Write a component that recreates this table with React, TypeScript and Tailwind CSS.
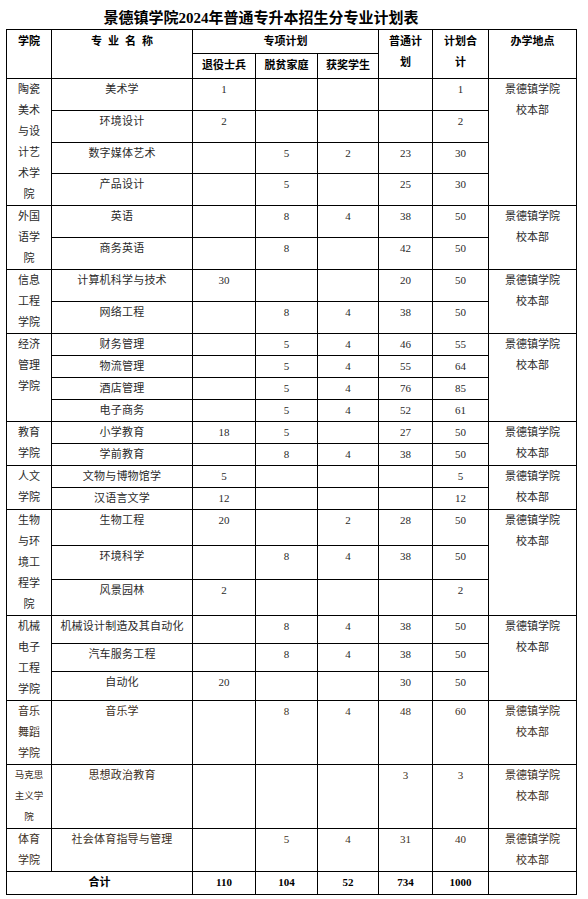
type Row = {
  h: string;
  name: string;
  a?: string;
  b?: string;
  c?: string;
  d?: string;
  e?: string;
};

type Group = {
  college: string[];
  small?: boolean;
  tint?: boolean;
  rows: Row[];
};

const groups: Group[] = [
  {
    college: ['陶瓷', '美术', '与设', '计艺', '术学', '院'],
    rows: [
      { h: 'h-[32px]', name: '美术学', a: '1', e: '1' },
      { h: 'h-[32px]', name: '环境设计', a: '2', e: '2' },
      { h: 'h-[31px]', name: '数字媒体艺术', b: '5', c: '2', d: '23', e: '30' },
      { h: 'h-[32px]', name: '产品设计', b: '5', d: '25', e: '30' },
    ],
  },
  {
    college: ['外国', '语学', '院'],
    rows: [
      { h: 'h-[32px]', name: '英语', b: '8', c: '4', d: '38', e: '50' },
      { h: 'h-[32px]', name: '商务英语', b: '8', d: '42', e: '50' },
    ],
  },
  {
    college: ['信息', '工程', '学院'],
    rows: [
      { h: 'h-[32px]', name: '计算机科学与技术', a: '30', d: '20', e: '50' },
      { h: 'h-[32px]', name: '网络工程', b: '8', c: '4', d: '38', e: '50' },
    ],
  },
  {
    college: ['经济', '管理', '学院'],
    rows: [
      { h: 'h-[22px]', name: '财务管理', b: '5', c: '4', d: '46', e: '55' },
      { h: 'h-[22px]', name: '物流管理', b: '5', c: '4', d: '55', e: '64' },
      { h: 'h-[22px]', name: '酒店管理', b: '5', c: '4', d: '76', e: '85' },
      { h: 'h-[22px]', name: '电子商务', b: '5', c: '4', d: '52', e: '61' },
    ],
  },
  {
    college: ['教育', '学院'],
    rows: [
      { h: 'h-[22px]', name: '小学教育', a: '18', b: '5', d: '27', e: '50' },
      { h: 'h-[22px]', name: '学前教育', b: '8', c: '4', d: '38', e: '50' },
    ],
  },
  {
    college: ['人文', '学院'],
    rows: [
      { h: 'h-[22px]', name: '文物与博物馆学', a: '5', e: '5' },
      { h: 'h-[22px]', name: '汉语言文学', a: '12', e: '12' },
    ],
  },
  {
    college: ['生物', '与环', '境工', '程学', '院'],
    rows: [
      { h: 'h-[36px]', name: '生物工程', a: '20', c: '2', d: '28', e: '50' },
      { h: 'h-[34px]', name: '环境科学', b: '8', c: '4', d: '38', e: '50' },
      { h: 'h-[36px]', name: '风景园林', a: '2', e: '2' },
    ],
  },
  {
    college: ['机械', '电子', '工程', '学院'],
    rows: [
      { h: 'h-[28px]', name: '机械设计制造及其自动化', b: '8', c: '4', d: '38', e: '50' },
      { h: 'h-[28px]', name: '汽车服务工程', b: '8', c: '4', d: '38', e: '50' },
      { h: 'h-[29px]', name: '自动化', a: '20', d: '30', e: '50' },
    ],
  },
  {
    college: ['音乐', '舞蹈', '学院'],
    tint: true,
    rows: [{ h: 'h-[64px]', name: '音乐学', b: '8', c: '4', d: '48', e: '60' }],
  },
  {
    college: ['马克思', '主义学', '院'],
    small: true,
    tint: true,
    rows: [{ h: 'h-[64px]', name: '思想政治教育', d: '3', e: '3' }],
  },
  {
    college: ['体育', '学院'],
    tint: true,
    rows: [{ h: 'h-[43px]', name: '社会体育指导与管理', b: '5', c: '4', d: '31', e: '40' }],
  },
];

const cell = 'border border-black p-0 align-top text-center leading-[21px]';

export default function App() {
  return (
    <div className="w-[588px] h-[899px] bg-white font-['Liberation_Serif','Noto_Sans_CJK_SC',serif] text-[11px] text-[#2a2a2a]">
      <div className="ml-[6px] w-[510px] h-[29px] pt-[8px] text-center text-[15px] leading-[21px] font-bold text-black">
        景德镇学院2024年普通专升本招生分专业计划表
      </div>

      <table className="ml-[6px] w-[571px] table-fixed border-collapse">
        <colgroup>
          <col className="w-[45px]" />
          <col className="w-[141px]" />
          <col className="w-[63px]" />
          <col className="w-[62px]" />
          <col className="w-[61px]" />
          <col className="w-[54px]" />
          <col className="w-[56px]" />
          <col className="w-[88px]" />
        </colgroup>
        <thead className="font-['Noto_Sans_CJK_SC',sans-serif] font-bold text-black">
          <tr className="h-[24px]">
            <th rowSpan={2} className={cell}>学院</th>
            <th rowSpan={2} className={cell}>
              <span className="pl-[6px] tracking-[6px]">专业名称</span>
            </th>
            <th colSpan={3} className={cell}>专项计划</th>
            <th rowSpan={2} className={cell}>
              普通计
              <br />划
            </th>
            <th rowSpan={2} className={cell}>
              计划合
              <br />计
            </th>
            <th rowSpan={2} className={cell}>办学地点</th>
          </tr>
          <tr className="h-[25px]">
            <th className={cell}>退役士兵</th>
            <th className={cell}>脱贫家庭</th>
            <th className={cell}>获奖学生</th>
          </tr>
        </thead>
        <tbody>
          {groups.map((g) =>
            g.rows.map((r, i) => (
              <tr key={g.college.join('') + r.name} className={g.tint ? 'text-[#3d3024]' : ''}>
                {i === 0 && (
                  <td rowSpan={g.rows.length} className={cell}>
                    {g.college.map((line) => (
                      <div key={line} className={g.small ? 'text-[9.5px]' : ''}>
                        {line}
                      </div>
                    ))}
                  </td>
                )}
                <td className={`${cell} ${r.h} tracking-[0.2px]`}>{r.name}</td>
                <td className={cell}>{r.a}</td>
                <td className={cell}>{r.b}</td>
                <td className={cell}>{r.c}</td>
                <td className={cell}>{r.d}</td>
                <td className={cell}>{r.e}</td>
                {i === 0 && (
                  <td rowSpan={g.rows.length} className={cell}>
                    <div>景德镇学院</div>
                    <div>校本部</div>
                  </td>
                )}
              </tr>
            ))
          )}
          <tr className="font-bold text-black">
            <td colSpan={2} className={`${cell} h-[23px] align-middle`}>合计</td>
            <td className={`${cell} align-middle`}>110</td>
            <td className={`${cell} align-middle`}>104</td>
            <td className={`${cell} align-middle`}>52</td>
            <td className={`${cell} align-middle`}>734</td>
            <td className={`${cell} align-middle`}>1000</td>
            <td className={cell}></td>
          </tr>
        </tbody>
      </table>
    </div>
  );
}
